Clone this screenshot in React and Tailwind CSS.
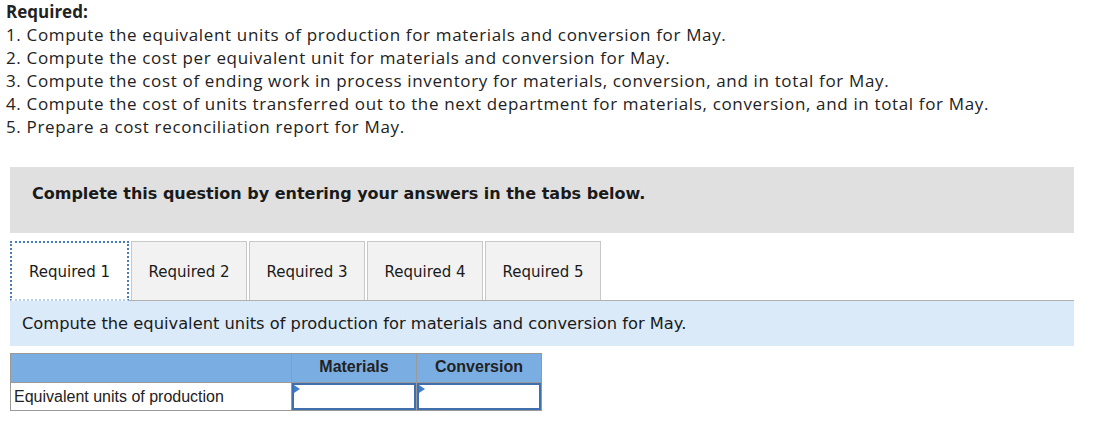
export default function App() {
  const items = [
    "1. Compute the equivalent units of production for materials and conversion for May.",
    "2. Compute the cost per equivalent unit for materials and conversion for May.",
    "3. Compute the cost of ending work in process inventory for materials, conversion, and in total for May.",
    "4. Compute the cost of units transferred out to the next department for materials, conversion, and in total for May.",
    "5. Prepare a cost reconciliation report for May.",
  ];
  const tabs = ["Required 1", "Required 2", "Required 3", "Required 4", "Required 5"];

  return (
    <div className="w-[1096px] h-[421px] bg-white overflow-hidden">
      <div className="pl-[6px] text-[17px] leading-[23px] tracking-[0.65px] text-[#222] font-['Open_Sans',sans-serif]">
        <div className="font-bold tracking-normal">Required:</div>
        {items.map((t) => (
          <div key={t}>{t}</div>
        ))}
      </div>

      <div className="pl-[10px] pr-[22px] pt-[29px] font-['DejaVu_Sans',Verdana,sans-serif]">
        <div className="h-[66px] bg-[#e0e0e0] pt-[17px] pl-[22px] text-[16px] leading-[20px] font-bold text-[#1a1a1a]">
          Complete this question by entering your answers in the tabs below.
        </div>

        <div className="mt-[8px] flex items-end border-b border-[#b0b0b0]">
          {tabs.map((t, i) => (
            <div
              key={t}
              className={
                i === 0
                  ? "w-[119px] h-[60px] -mb-px pt-[2px] bg-white border-2 border-dotted border-[#4a7ac0] border-b-[#b8d0ee] flex items-center justify-center text-[15px] text-[#1a1a1a]"
                  : "w-[116px] h-[59px] ml-[2px] pt-[2px] bg-[#f2f2f2] border border-b-0 border-[#c8c8c8] flex items-center justify-center text-[15px] text-[#1a1a1a]"
              }
            >
              {t}
            </div>
          ))}
        </div>

        <div className="h-[45px] bg-[#daeaf8] flex items-center pt-[2px] pl-[12px] text-[16.3px] text-[#1a1a1a]">
          Compute the equivalent units of production for materials and conversion for May.
        </div>
      </div>

      <div className="pl-[10px] pt-[7px] font-['Liberation_Sans',Arial,sans-serif]">
        <table className="border-collapse text-[16px] text-[#222]">
          <tbody>
            <tr className="bg-[#7aaee3] h-[29px]">
              <td className="w-[281px] border border-[#9a9a9a]"></td>
              <td className="w-[125px] border border-[#9a9a9a] text-center font-bold pb-[2px]">Materials</td>
              <td className="w-[125px] border border-[#9a9a9a] text-center font-bold pb-[2px]">Conversion</td>
            </tr>
            <tr className="h-[28px]">
              <td className="border border-[#9a9a9a] pl-[3px]">Equivalent units of production</td>
              <td className="border border-[#9a9a9a] p-0">
                <div className="relative h-[27px] border-2 border-[#3f6fae] bg-white">
                  <div className="absolute left-0 top-0 w-0 h-0 border-t-[4px] border-b-[4px] border-l-[6px] border-t-transparent border-b-transparent border-l-[#3f7fd0]"></div>
                </div>
              </td>
              <td className="border border-[#9a9a9a] p-0">
                <div className="relative h-[27px] border-2 border-[#3f6fae] bg-white">
                  <div className="absolute left-0 top-0 w-0 h-0 border-t-[4px] border-b-[4px] border-l-[6px] border-t-transparent border-b-transparent border-l-[#3f7fd0]"></div>
                </div>
              </td>
            </tr>
          </tbody>
        </table>
      </div>
    </div>
  );
}
